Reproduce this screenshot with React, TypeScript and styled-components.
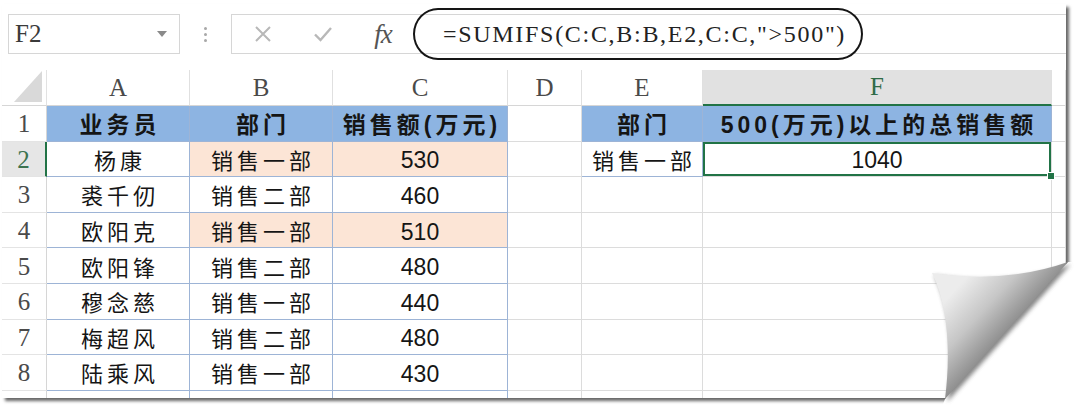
import styled, { createGlobalStyle } from "styled-components";

const GlobalStyle = createGlobalStyle`
  html, body {
    margin: 0;
    padding: 0;
    background: #ffffff;
  }
  body {
    font-family: "Liberation Sans", "Noto Sans CJK SC", sans-serif;
  }
`;

const Stage = styled.div`
  position: relative;
  width: 1080px;
  height: 412px;
  overflow: hidden;
  background: #fff;
`;

const Page = styled.div`
  margin: 4px 0 0 2px;
  width: 1064px;
  height: 394px;
  background: #fff;
  box-shadow: 3px 3px 3px rgba(0, 0, 0, 0.6);
  overflow: hidden;
  display: flex;
  flex-direction: column;
`;

/* ---------- formula bar ---------- */

const FormulaBar = styled.div`
  display: flex;
  align-items: center;
  height: 40px;
  margin-top: 10px;
  padding-left: 6px;
`;

const NameBox = styled.div`
  box-sizing: border-box;
  width: 172px;
  height: 40px;
  border: 1px solid #d6d6d6;
  display: flex;
  align-items: center;
  justify-content: space-between;
  padding: 0 12px 0 6px;
  font-family: "Liberation Serif", serif;
  font-size: 25px;
  color: #3a3a3a;
`;

const Caret = styled.span`
  width: 0;
  height: 0;
  border-left: 5px solid transparent;
  border-right: 5px solid transparent;
  border-top: 6px solid #8a8a8a;
`;

const Separator = styled.div`
  width: 51px;
  display: flex;
  flex-direction: column;
  align-items: center;
  gap: 3px;

  span {
    width: 3px;
    height: 3px;
    border-radius: 50%;
    background: #a8a8a8;
  }
`;

const FormulaBox = styled.div`
  box-sizing: border-box;
  flex: 1;
  height: 40px;
  border: 1px solid #d6d6d6;
  border-right: none;
  display: flex;
  align-items: center;
  padding-left: 1px;
`;

const IconSlot = styled.div`
  width: 60px;
  display: flex;
  justify-content: center;
  align-items: center;
`;

const Fx = styled.span`
  font-family: "Liberation Serif", serif;
  font-style: italic;
  font-size: 27px;
  color: #555;
  letter-spacing: -1px;
`;

const FormulaOval = styled.div`
  box-sizing: border-box;
  width: 450px;
  height: 52px;
  flex-shrink: 0;
  border: 2.5px solid #151515;
  border-radius: 25px / 26px;
  display: flex;
  align-items: center;
  padding-left: 28px;
  font-family: "Liberation Serif", serif;
  font-size: 24px;
  letter-spacing: 1.7px;
  color: #222;
  white-space: nowrap;
`;

/* ---------- sheet ---------- */

const Sheet = styled.div`
  margin-top: 16px;
  display: grid;
  grid-template-columns: 45px 143px 143px 175px 74px 121px 349px 1fr;
  grid-template-rows: 36px;
  grid-auto-rows: 35.6px;
`;

const Corner = styled.div`
  display: flex;
  justify-content: flex-end;
  align-items: flex-end;
  padding: 0 4px 3px 0;
  border-right: 1px solid #e2e2e2;
  border-bottom: 1px solid #d6d6d6;

  span {
    width: 28px;
    height: 31px;
    background: #d9d9d9;
    clip-path: polygon(100% 0, 100% 100%, 0 100%);
  }
`;

const ColHead = styled.div<{ $active?: boolean }>`
  display: flex;
  align-items: center;
  justify-content: center;
  font-family: "Liberation Serif", serif;
  font-size: 25px;
  color: ${(p) => (p.$active ? "#2f6b47" : "#4a4a4a")};
  background: ${(p) => (p.$active ? "#e1e1e1" : "#fff")};
  border-right: 1px solid #e0e0e0;
  border-bottom: ${(p) => (p.$active ? "2px solid #217346" : "1px solid #d6d6d6")};
`;

const RowHead = styled.div<{ $active?: boolean }>`
  display: flex;
  align-items: center;
  justify-content: center;
  padding-top: 2px;
  font-family: "Liberation Serif", serif;
  font-size: 25px;
  color: ${(p) => (p.$active ? "#3c7350" : "#4a4a4a")};
  background: ${(p) => (p.$active ? "#e6e6e6" : "#fff")};
  border-right: ${(p) => (p.$active ? "2px solid #217346" : "1px solid #d6d6d6")};
  border-bottom: 1px solid #e4e4e4;
`;

type Fill = "head" | "peach" | "none";

const fills: Record<Fill, string> = {
  head: "#8db4e2",
  peach: "#fce5d6",
  none: "transparent",
};

const Cell = styled.div<{
  $fill: Fill;
  $boxed: boolean;
  $num: boolean;
  $selected?: boolean;
}>`
  position: relative;
  display: flex;
  align-items: center;
  justify-content: center;
  white-space: nowrap;
  background: ${(p) => fills[p.$fill]};
  border-right: 1px solid ${(p) => (p.$boxed ? "#9db4d6" : "#dcdcdc")};
  border-bottom: 1px solid ${(p) => (p.$boxed ? "#9db4d6" : "#dcdcdc")};
  font-family: "Liberation Sans", "Noto Sans CJK SC", sans-serif;
  font-size: ${(p) => (p.$num ? "23px" : p.$fill === "head" ? "23px" : "22px")};
  font-weight: ${(p) => (p.$fill === "head" ? 700 : 400)};
  letter-spacing: ${(p) => (p.$num ? "0" : "4px")};
  padding-left: ${(p) => (p.$num ? "0" : "4px")};
  padding-top: ${(p) => (p.$num ? "4px" : "0")};
  color: #151515;
  z-index: ${(p) => (p.$selected ? 1 : 0)};
  box-shadow: ${(p) => (p.$selected ? "inset 0 0 0 2px #217346" : "none")};

  ${(p) =>
    p.$selected &&
    `
    &::after {
      content: "";
      position: absolute;
      right: -4px;
      bottom: -4px;
      width: 6px;
      height: 6px;
      background: #217346;
      border: 1px solid #fff;
    }
  `}
`;

const CurlLayer = styled.svg`
  position: absolute;
  left: 900px;
  top: 230px;
  width: 180px;
  height: 182px;
`;

const columns = ["A", "B", "C", "D", "E", "F", ""];

type Row = {
  name: string;
  dept: string;
  amount: string;
  hot?: boolean;
};

const people: Row[] = [
  { name: "杨康", dept: "销售一部", amount: "530", hot: true },
  { name: "裘千仞", dept: "销售二部", amount: "460" },
  { name: "欧阳克", dept: "销售一部", amount: "510", hot: true },
  { name: "欧阳锋", dept: "销售二部", amount: "480" },
  { name: "穆念慈", dept: "销售一部", amount: "440" },
  { name: "梅超风", dept: "销售二部", amount: "480" },
  { name: "陆乘风", dept: "销售一部", amount: "430" },
  { name: "柯镇恶", dept: "销售二部", amount: "450" },
];

const isNum = (s: string) => /^\d+$/.test(s);

const App = () => {
  const grid: { text: string; fill: Fill; boxed: boolean; selected?: boolean }[][] = [];

  grid.push([
    { text: "业务员", fill: "head", boxed: true },
    { text: "部门", fill: "head", boxed: true },
    { text: "销售额(万元)", fill: "head", boxed: true },
    { text: "", fill: "none", boxed: false },
    { text: "部门", fill: "head", boxed: true },
    { text: "500(万元)以上的总销售额", fill: "head", boxed: true },
    { text: "", fill: "none", boxed: false },
  ]);

  people.forEach((p, i) => {
    const first = i === 0;
    grid.push([
      { text: p.name, fill: "none", boxed: true },
      { text: p.dept, fill: p.hot ? "peach" : "none", boxed: true },
      { text: p.amount, fill: p.hot ? "peach" : "none", boxed: true },
      { text: "", fill: "none", boxed: false },
      { text: first ? "销售一部" : "", fill: "none", boxed: first },
      { text: first ? "1040" : "", fill: "none", boxed: false, selected: first },
      { text: "", fill: "none", boxed: false },
    ]);
  });

  return (
    <Stage>
      <GlobalStyle />
      <Page>
        <FormulaBar>
          <NameBox>
            F2
            <Caret />
          </NameBox>
          <Separator>
            <span />
            <span />
            <span />
          </Separator>
          <FormulaBox>
            <IconSlot>
              <svg width="18" height="18" viewBox="0 0 18 18">
                <path d="M2 2 L16 16 M16 2 L2 16" stroke="#b8b8b8" strokeWidth="2" fill="none" />
              </svg>
            </IconSlot>
            <IconSlot>
              <svg width="20" height="18" viewBox="0 0 20 18">
                <path d="M2 9.5 L7.5 15 L18 3" stroke="#b8b8b8" strokeWidth="2.4" fill="none" />
              </svg>
            </IconSlot>
            <IconSlot>
              <Fx>fx</Fx>
            </IconSlot>
            <FormulaOval>=SUMIFS(C:C,B:B,E2,C:C,"&gt;500")</FormulaOval>
          </FormulaBox>
        </FormulaBar>

        <Sheet>
          <Corner>
            <span />
          </Corner>
          {columns.map((c) => (
            <ColHead key={`h${c}`} $active={c === "F"}>
              {c}
            </ColHead>
          ))}
          {grid.map((row, r) => [
            <RowHead key={`r${r}`} $active={r === 1}>
              {r + 1}
            </RowHead>,
            ...row.map((cell, c) => (
              <Cell
                key={`c${r}-${c}`}
                $fill={cell.fill}
                $boxed={cell.boxed}
                $num={isNum(cell.text)}
                $selected={cell.selected}
              >
                {cell.text}
              </Cell>
            )),
          ])}
        </Sheet>
      </Page>

      <CurlLayer viewBox="0 0 180 182">
        <defs>
          <linearGradient id="curlFill" gradientUnits="userSpaceOnUse" x1="55" y1="60" x2="112" y2="112">
            <stop offset="0" stopColor="#ececec" />
            <stop offset="0.45" stopColor="#c6c6c6" />
            <stop offset="1" stopColor="#7c7c7c" />
          </linearGradient>
          <filter id="curlShadow" x="-20%" y="-20%" width="140%" height="140%">
            <feGaussianBlur stdDeviation="2" />
          </filter>
        </defs>
        <polygon points="168,32 180,32 180,182 40,182 45,169" fill="#fff" />
        <path
          d="M32 43 Q105 54 168 32 L45 169 C50 130 50 80 32 43 Z"
          fill="#555"
          opacity="0.7"
          transform="translate(2.5 2.5)"
          filter="url(#curlShadow)"
        />
        <path d="M32 43 Q105 54 168 32 L45 169 C50 130 50 80 32 43 Z" fill="url(#curlFill)" />
      </CurlLayer>
    </Stage>
  );
};

export default App;
